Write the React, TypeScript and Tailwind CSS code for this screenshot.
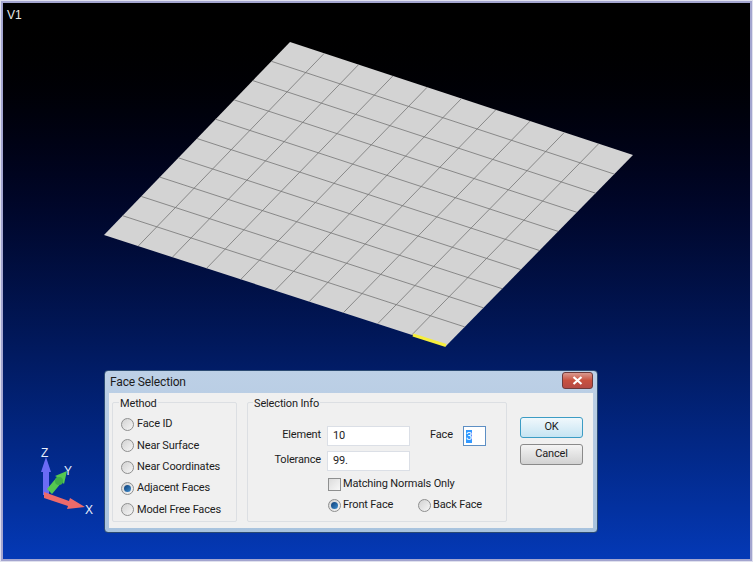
import React from "react";

// mesh corners, taken from the screenshot
const TOP = [290, 42];
const RIGHT = [633, 155];
const BOTTOM = [446, 346];
const LEFT = [104, 235];
const CELLS = 10;

const lerp = (a: number[], b: number[], t: number) => [
  a[0] + (b[0] - a[0]) * t,
  a[1] + (b[1] - a[1]) * t,
];

const Mesh = () => {
  const lines = [];
  for (let i = 1; i < CELLS; i++) {
    const t = i / CELLS;
    lines.push([lerp(TOP, RIGHT, t), lerp(LEFT, BOTTOM, t)]);
    lines.push([lerp(TOP, LEFT, t), lerp(RIGHT, BOTTOM, t)]);
  }
  return (
    <svg className="absolute inset-0" width="753" height="562">
      <polygon
        points={[TOP, RIGHT, BOTTOM, LEFT].map((p) => p.join(",")).join(" ")}
        fill="#d3d3d3"
      />
      {lines.map((l, i) => (
        <line
          key={i}
          x1={l[0][0]}
          y1={l[0][1]}
          x2={l[1][0]}
          y2={l[1][1]}
          stroke="#757575"
          strokeWidth="0.8"
        />
      ))}
      <line x1="413" y1="335" x2="446" y2="345.5" stroke="#f6ee3c" strokeWidth="3" />
    </svg>
  );
};

const Triad = () => (
  <svg className="absolute inset-0" width="753" height="562">
    <path d="M43 495 L43 472 L41 472 L46 457 L51 472 L49 472 L49 495 Z" fill="#6b6bf5" />
    <path d="M47 489 L57 477 L55 476 L67 471 L64 484 L62 482 L52 494 Z" fill="#55c850" />
    <circle cx="59" cy="481" r="4" fill="#3fae48" />
    <path d="M44 492 L69 501 L70 498 L85 507 L67 509 L68 506 L44 498 Z" fill="#ee6a6a" />
    <g fontFamily="Liberation Sans, sans-serif" fontSize="12" fill="#e8eefc">
      <text x="41" y="457">Z</text>
      <text x="64" y="475">Y</text>
      <text x="85" y="514">X</text>
    </g>
  </svg>
);

const Radio = ({ checked = false }: { checked?: boolean }) => (
  <span className="flex h-[13px] w-[13px] shrink-0 items-center justify-center rounded-full border border-[#8e8f8f] bg-gradient-to-br from-[#d2d2d2] to-[#f6f6f6]">
    {checked && (
      <span className="h-[7px] w-[7px] rounded-full bg-gradient-to-br from-[#0f3f78] to-[#3f8fd0]" />
    )}
  </span>
);

const Group = ({
  title,
  className,
  legend,
  children,
}: {
  title: string;
  className: string;
  legend: string;
  children: React.ReactNode;
}) => (
  <div className={"relative rounded-[2px] border border-[#dcdfe3] " + className}>
    <span className={"absolute top-[-7px] whitespace-nowrap bg-[#f0f0f0] px-px leading-[15px] " + legend}>{title}</span>
    {children}
  </div>
);

const Input = ({ value, className }: { value: string; className: string }) => (
  <div className={"flex h-[20px] items-center border border-[#dbdfe6] bg-white pl-[5px] " + className}>
    {value}
  </div>
);

const methods = [
  { label: "Face ID" },
  { label: "Near Surface" },
  { label: "Near Coordinates" },
  { label: "Adjacent Faces", checked: true },
  { label: "Model Free Faces" },
];

const App = () => {
  return (
    <div className="relative h-[562px] w-[753px] overflow-hidden border-[3px] border-[#a3a5cf] bg-gradient-to-b from-[#000000] to-[#0439b6] outline outline-1 -outline-offset-1 outline-[#dfe0ee]">
      <div className="absolute left-[4px] top-[4px] font-['Liberation_Sans',sans-serif] text-[12px] leading-[16px] text-[#e6e6e6]">
        V1
      </div>
      <div className="absolute -left-[3px] -top-[3px]">
        <Mesh />
        <Triad />
      </div>

      {/* dialog */}
      <div className="absolute left-[101px] top-[367px] flex h-[163px] w-[494px] flex-col rounded-[4px] border border-[#2b4a72] bg-gradient-to-b from-[#bdd0e6] to-[#a8c3de] px-[4px] pb-[4px] font-['Roboto',sans-serif] text-[11px] tracking-[-0.15px] text-[#1c1c1c]">
        <div className="flex h-[22px] shrink-0 items-center justify-between pb-[1px] pl-[1px]">
          <span className="text-[12px]">Face Selection</span>
          <div className="mb-[2px] flex h-[17px] w-[31px] items-center justify-center rounded-[3px] border border-[#6d3a3a] bg-gradient-to-b from-[#d9998f] via-[#c8513f] to-[#b54a44]">
            <svg width="11" height="9" viewBox="0 0 11 9">
              <path d="M1.5 1 L9.5 8 M9.5 1 L1.5 8" stroke="#ffffff" strokeWidth="2.2" />
            </svg>
          </div>
        </div>

        <div className="flex min-h-0 flex-1 items-start bg-[#f0f0f0] pl-[3px] pt-[9px]">
          <Group title="Method" legend="left-[6px]" className="h-[120px] w-[125px] shrink-0">
            <div className="flex flex-col pl-[8px] pt-[11px]">
              {methods.map((m) => (
                <label key={m.label} className="flex h-[21.3px] items-center gap-[3px]">
                  <Radio checked={m.checked} />
                  <span className="whitespace-nowrap">{m.label}</span>
                </label>
              ))}
            </div>
          </Group>

          <Group title="Selection Info" legend="left-[5px]" className="ml-[10px] h-[120px] w-[260px] shrink-0">
            <div className="flex flex-col pt-[23px]">
              <div className="flex items-center">
                <span className="w-[73px] pb-[2px] text-right">Element</span>
                <Input value="10" className="ml-[6px] w-[83px]" />
                <span className="ml-[20px] w-[24px] pb-[2px]">Face</span>
                <div className="ml-[9px] flex h-[20px] w-[23px] items-center border border-[#5d8fc4] bg-white pl-[2px]">
                  <span className="bg-[#3399ff] leading-[13px] text-white">3</span>
                </div>
              </div>
              <div className="mt-[5px] flex items-center">
                <span className="w-[73px] pb-[2px] text-right">Tolerance</span>
                <Input value="99." className="ml-[6px] w-[83px]" />
              </div>
              <div className="ml-[80px] mt-[6px] flex h-[15px] items-center gap-[2px]">
                <span className="h-[13px] w-[13px] border border-[#8e8f8f] bg-gradient-to-br from-[#dcdcdc] to-[#f8f8f8]" />
                <span>Matching Normals Only</span>
              </div>
              <div className="ml-[80px] mt-[6px] flex h-[15px] items-center">
                <Radio checked />
                <span className="ml-[2px] w-[75px]">Front Face</span>
                <Radio />
                <span className="ml-[2px]">Back Face</span>
              </div>
            </div>
          </Group>

          <div className="ml-[13px] flex w-[63px] shrink-0 flex-col gap-[6px] pt-[15px]">
            <button className="h-[21px] rounded-[3px] border border-[#3c9cc4] bg-gradient-to-b from-[#f0f8fc] to-[#c6e4f2]">
              OK
            </button>
            <button className="h-[21px] rounded-[3px] border border-[#8a8a8a] bg-gradient-to-b from-[#f4f4f4] to-[#d2d2d2]">
              Cancel
            </button>
          </div>
        </div>
      </div>
    </div>
  );
};

export default App;
